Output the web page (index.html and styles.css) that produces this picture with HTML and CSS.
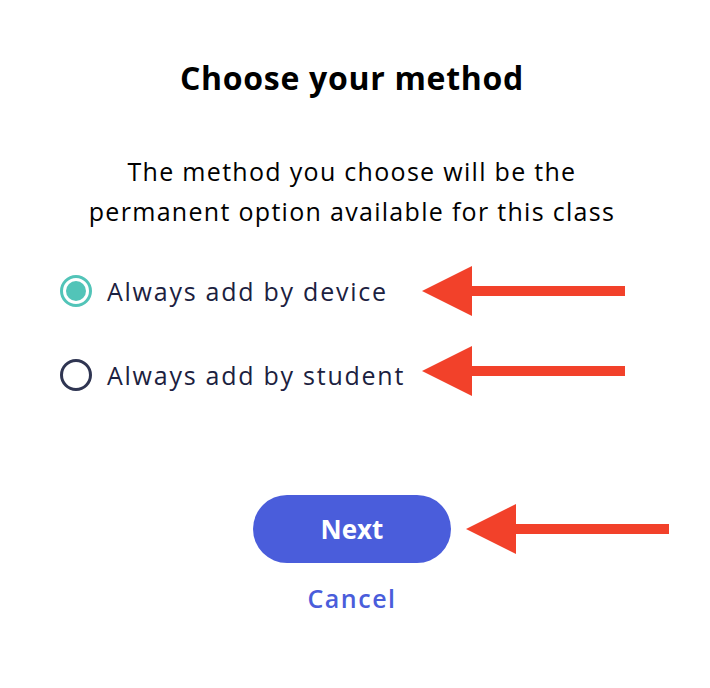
FILE: index.html
```html
<!DOCTYPE html>
<html>
<head>
<meta charset="utf-8">
<link rel="stylesheet" href="styles.css">
</head>
<body>
<div class="dialog">
  <h1 class="title">Choose your method</h1>
  <p class="desc">The method you choose will be the<br>permanent option available for this class</p>
  <div class="options">
    <label class="option">
      <span class="radio checked"><span class="dot"></span></span>
      <span class="label">Always add by device</span>
    </label>
    <label class="option">
      <span class="radio"></span>
      <span class="label">Always add by student</span>
    </label>
  </div>
  <div class="actions">
    <button class="btn-next">Next</button>
    <a class="cancel">Cancel</a>
  </div>

  <svg class="arrow arrow-1" width="203" height="50" viewBox="0 0 203 50"><polygon points="0,25 50,0 50,50" fill="#f2412a"/><rect x="49" y="20" width="154" height="10" fill="#f2412a"/></svg>
  <svg class="arrow arrow-2" width="203" height="50" viewBox="0 0 203 50"><polygon points="0,25 50,0 50,50" fill="#f2412a"/><rect x="49" y="20" width="154" height="10" fill="#f2412a"/></svg>
  <svg class="arrow arrow-3" width="203" height="50" viewBox="0 0 203 50"><polygon points="0,25 50,0 50,50" fill="#f2412a"/><rect x="49" y="20" width="154" height="10" fill="#f2412a"/></svg>
</div>
</body>
</html>
```
FILE: styles.css
```css
* { box-sizing: border-box; }
html, body { margin: 0; padding: 0; background: #fff; }
body { font-family: "Open Sans", "Lato", sans-serif; color: #1b2140; }
.dialog {
  position: relative;
  width: 710px;
  height: 688px;
  display: flex;
  flex-direction: column;
  align-items: center;
  padding: 60px 6px 0 0;
}
.title {
  margin: 0;
  font-size: 32px;
  line-height: 36px;
  font-weight: 700;
  letter-spacing: 0.7px;
  color: #000;
  text-align: center;
}
.desc {
  margin: 55px 0 0;
  font-size: 25px;
  line-height: 40px;
  letter-spacing: 1.3px;
  color: #000;
  text-align: center;
}
.options {
  align-self: flex-start;
  margin: 44px 0 0 60px;
  display: flex;
  flex-direction: column;
  gap: 52px;
}
.option {
  display: flex;
  align-items: center;
  gap: 15px;
  height: 32px;
}
.radio {
  width: 32px;
  height: 32px;
  border-radius: 50%;
  border: 3px solid #2f3552;
  display: flex;
  align-items: center;
  justify-content: center;
}
.radio.checked { border-color: #52c4b8; }
.dot {
  width: 20px;
  height: 20px;
  border-radius: 50%;
  background: #52c4b8;
}
.label {
  font-size: 25px;
  line-height: 32px;
  letter-spacing: 1.75px;
  color: #1b2140;
}
.actions {
  margin-top: 104px;
  display: flex;
  flex-direction: column;
  align-items: center;
  gap: 20px;
}
.btn-next {
  width: 198px;
  height: 68px;
  border: none;
  border-radius: 34px;
  background: #4a5ddb;
  color: #fff;
  font-family: inherit;
  font-size: 26px;
  font-weight: 700;
}
.cancel {
  font-size: 25px;
  line-height: 30px;
  font-weight: 600;
  letter-spacing: 1.5px;
  color: #4a5ddb;
}
.arrow { position: absolute; }
.arrow-1 { left: 422px; top: 266px; }
.arrow-2 { left: 422px; top: 346px; }
.arrow-3 { left: 466px; top: 504px; }
```
